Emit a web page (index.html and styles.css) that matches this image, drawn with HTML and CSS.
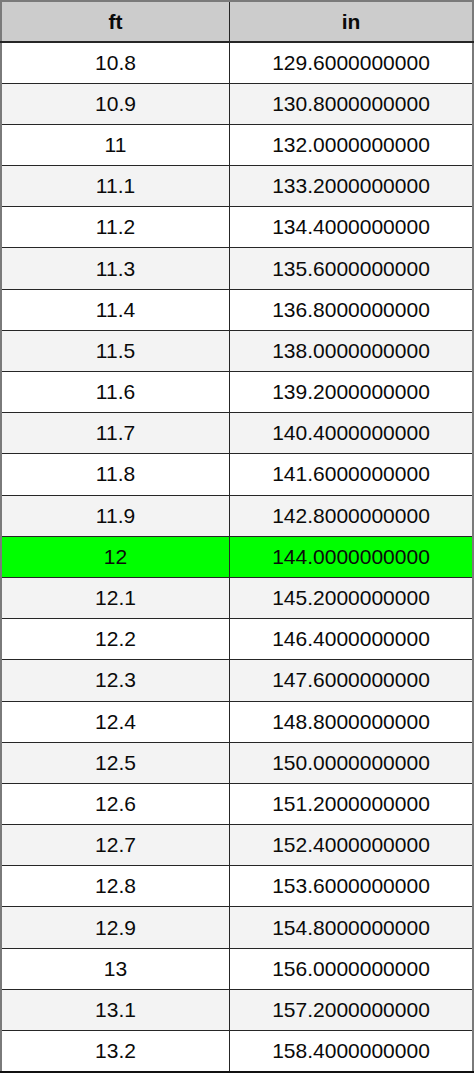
FILE: index.html
```html
<!DOCTYPE html>
<html>
<head>
<meta charset="utf-8">
<link rel="stylesheet" href="styles.css">
</head>
<body>
<table class="conv">
<thead>
<tr><th class="c1">ft</th><th class="c2">in</th></tr>
</thead>
<tbody>
<tr><td>10.8</td><td>129.6000000000</td></tr>
<tr class="alt"><td>10.9</td><td>130.8000000000</td></tr>
<tr><td>11</td><td>132.0000000000</td></tr>
<tr class="alt"><td>11.1</td><td>133.2000000000</td></tr>
<tr><td>11.2</td><td>134.4000000000</td></tr>
<tr class="alt"><td>11.3</td><td>135.6000000000</td></tr>
<tr><td>11.4</td><td>136.8000000000</td></tr>
<tr class="alt"><td>11.5</td><td>138.0000000000</td></tr>
<tr><td>11.6</td><td>139.2000000000</td></tr>
<tr class="alt"><td>11.7</td><td>140.4000000000</td></tr>
<tr><td>11.8</td><td>141.6000000000</td></tr>
<tr class="alt"><td>11.9</td><td>142.8000000000</td></tr>
<tr class="hi"><td>12</td><td>144.0000000000</td></tr>
<tr class="alt"><td>12.1</td><td>145.2000000000</td></tr>
<tr><td>12.2</td><td>146.4000000000</td></tr>
<tr class="alt"><td>12.3</td><td>147.6000000000</td></tr>
<tr><td>12.4</td><td>148.8000000000</td></tr>
<tr class="alt"><td>12.5</td><td>150.0000000000</td></tr>
<tr><td>12.6</td><td>151.2000000000</td></tr>
<tr class="alt"><td>12.7</td><td>152.4000000000</td></tr>
<tr><td>12.8</td><td>153.6000000000</td></tr>
<tr class="alt"><td>12.9</td><td>154.8000000000</td></tr>
<tr><td>13</td><td>156.0000000000</td></tr>
<tr class="alt"><td>13.1</td><td>157.2000000000</td></tr>
<tr><td>13.2</td><td>158.4000000000</td></tr>
</tbody>
</table>
</body>
</html>
```
FILE: styles.css
```css
html, body {
  margin: 0;
  padding: 0;
  background: #ffffff;
}
.conv {
  width: 474px;
  border-collapse: collapse;
  border: 2px solid #7a7a7a;
  font-family: "Liberation Sans", Arial, sans-serif;
  font-size: 21px;
  color: #0a0a0a;
  table-layout: fixed;
}
.conv th, .conv td {
  border: 1px solid #262626;
  text-align: center;
  vertical-align: middle;
  padding: 0;
}
.conv thead tr {
  height: 41px;
  background: #cccccc;
}
.conv th {
  font-weight: bold;
  border-top: 2px solid #7a7a7a;
  border-bottom: 2px solid #262626;
}
.conv .c1 { width: 227px; }
.conv th:first-child, .conv td:first-child { border-left: 2px solid #7a7a7a; }
.conv th:last-child, .conv td:last-child { border-right: 2px solid #7a7a7a; }
.conv tbody tr {
  height: 41.2px;
  background: #ffffff;
}
.conv tbody tr.alt { background: #f3f3f3; }
.conv tbody tr.hi { background: #00ff00; }
.conv tbody tr:last-child td { border-bottom: 2px solid #111111; }
```
